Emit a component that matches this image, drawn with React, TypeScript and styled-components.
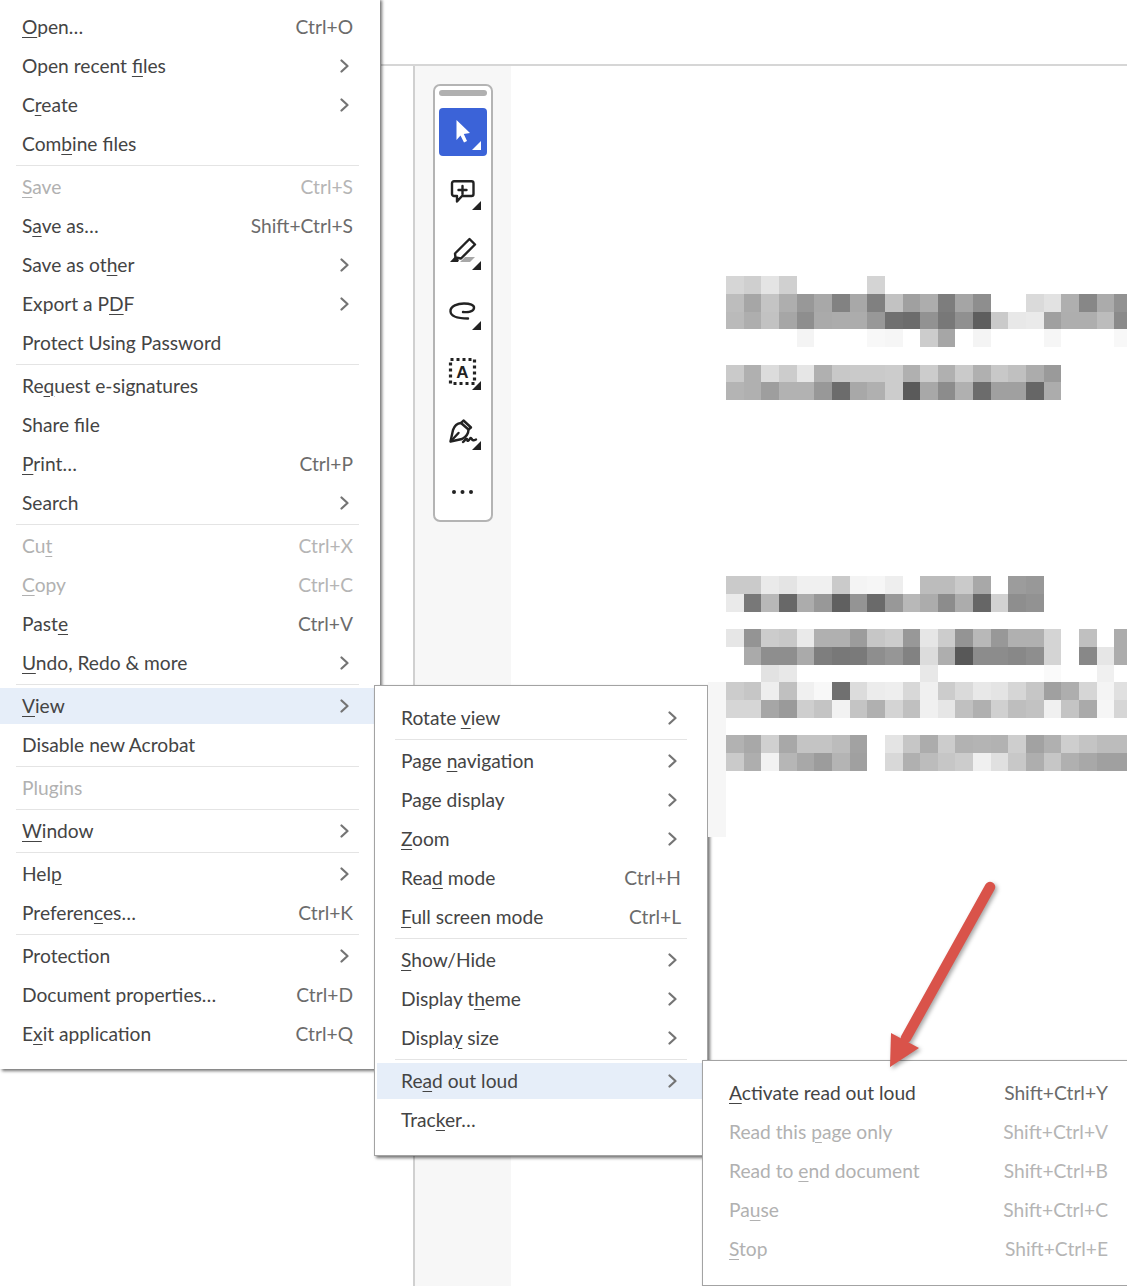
import React from 'react';
import styled, { createGlobalStyle } from 'styled-components';

const GlobalStyle = createGlobalStyle`
  html, body {
    margin: 0;
    padding: 0;
    background: #fff;
  }
  #root {
    width: 1127px;
    height: 1286px;
  }
`;

const Screen = styled.div`
  position: relative;
  width: 1127px;
  height: 1286px;
  overflow: hidden;
  background: #fff;
  font-family: 'Lato', 'Open Sans', sans-serif;
`;

const TopBar = styled.div`
  height: 64px;
  margin-left: 381px;
  border-bottom: 2px solid #d6d6d6;
`;

const Workspace = styled.div`
  display: flex;
  height: 1220px;
  padding-left: 413px;
`;

const ToolRail = styled.div`
  width: 96px;
  border-left: 2px solid #d0d0d0;
  background: #f7f7f7;
  padding: 18px 0 0 18px;
`;

const ToolBar = styled.div`
  width: 60px;
  height: 438px;
  box-sizing: border-box;
  border: 2px solid #b4b4b4;
  border-radius: 7px;
  background: #fff;
  padding: 4px 4px;
  display: flex;
  flex-direction: column;
  gap: 12px;
`;

const Grip = styled.div`
  height: 6px;
  border-radius: 3px;
  background: #b0b0b0;
`;

const ToolButton = styled.div<{ $active?: boolean }>`
  position: relative;
  flex: none;
  width: 48px;
  height: 48px;
  border-radius: 4px;
  display: flex;
  align-items: center;
  justify-content: center;
  background: ${(p) => (p.$active ? '#3b63d8' : 'transparent')};
  color: ${(p) => (p.$active ? '#fff' : '#222')};
`;

const Corner = styled.span<{ $active?: boolean }>`
  position: absolute;
  right: 6px;
  bottom: 6px;
  width: 9px;
  height: 9px;
  background: ${(p) => (p.$active ? '#fff' : '#222')};
  clip-path: polygon(100% 0, 100% 100%, 0 100%);
`;

const ToolIcon = styled.svg`
  display: block;
  width: 32px;
  height: 32px;
  fill: none;
  stroke: currentColor;
  stroke-width: 2.4;
  stroke-linejoin: round;
  stroke-linecap: round;
`;

const PageArea = styled.div`
  flex: 1;
  padding: 210px 0 0 215px;
  background: #fff;
`;

const Mosaic = styled.svg`
  display: block;
`;

const Menu = styled.div<{ $top: number; $left: number; $width: number; $height: number; $pad: number; $flush?: boolean }>`
  position: absolute;
  top: ${(p) => p.$top}px;
  left: ${(p) => p.$left}px;
  width: ${(p) => p.$width}px;
  height: ${(p) => p.$height}px;
  box-sizing: border-box;
  padding-top: ${(p) => p.$pad}px;
  display: flex;
  flex-direction: column;
  background: #fff;
  border: ${(p) => (p.$flush ? '0' : '1px solid #a3a3a3')};
  box-shadow: 2px 2px 3px rgba(0, 0, 0, 0.55);
`;

const Row = styled.div<{ $hot?: boolean; $inset: number; $end: number; $gutter: number }>`
  flex: none;
  box-sizing: border-box;
  display: flex;
  align-items: center;
  justify-content: space-between;
  height: 36px;
  margin: 1.5px 0 1.5px ${(p) => p.$gutter}px;
  padding: 0 ${(p) => p.$end}px 0 ${(p) => p.$inset - p.$gutter}px;
  background: ${(p) => (p.$hot ? '#e6eef9' : 'transparent')};
  font-size: 19.2px;
  line-height: 36px;
  white-space: nowrap;

  & > svg {
    margin-right: 3px;
  }
`;

const Label = styled.span<{ $off?: boolean }>`
  color: ${(p) => (p.$off ? '#b1b1b1' : '#444')};
`;

const Key = styled.span<{ $off?: boolean }>`
  color: ${(p) => (p.$off ? '#b5b5b5' : '#6b6b6b')};
`;

const Mnemonic = styled.span`
  text-decoration: underline;
  text-decoration-thickness: 1px;
  text-underline-offset: 3px;
`;

const Rule = styled.div<{ $from: number; $to: number }>`
  flex: none;
  height: 1px;
  margin: 1.5px ${(p) => p.$to}px 1.5px ${(p) => p.$from}px;
  background: #e4e4e4;
`;

// the pale band left of the pasted page image, it sits over the view menu's shadow
const ImageEdge = styled.div`
  position: absolute;
  left: 708px;
  top: 682px;
  width: 18px;
  height: 155px;
  background: #f6f6f6;
`;

const Arrow = styled.svg`
  position: absolute;
  left: 870px;
  top: 870px;
  filter: drop-shadow(2px 2px 2px rgba(0, 0, 0, 0.35));
`;

const Chevron = () => (
  <svg width="10" height="14" viewBox="0 0 10 14" fill="none">
    <path d="M1.500 1.500L7.500 7L1.500 12.500" stroke="#747474" strokeWidth="2.200" strokeLinecap="round" strokeLinejoin="round" />
  </svg>
);

// one entry per mosaic line: grid row, then grey levels; ff cells stay white
const mosaicRows: [number, string][] = [
  [0, 'd6 cf e4 d0 ff ff ff ff d4'],
  [1, 'bd a6 c4 ae 98 a8 82 a8 80 c2 a0 ad 7d a5 8e ff ff da e2 af 87 ab 92'],
  [2, 'ba ae c2 a6 8e aa ac ac 98 70 6c 92 78 90 5e ca e8 ea a0 ae ae bc 8a'],
  [3, 'ff ff ff ff f4 ff ff ff f8 f6 ff cc a6 ff f4 ff ff ff f6 ff ff ff f8'],
  [5, 'ca b0 dc cc e6 b0 c8 ca ca cc b0 cc b0 ca b0 c8 c0 ac 9a'],
  [6, 'b4 b0 9e b2 b2 98 6c a8 b0 cc 5a a8 8c b0 6c a0 a0 66 ac'],
  [17, 'ca ca ea e4 f0 f0 ca f4 f6 ee ff bc bc ca a8 ff 9c 98'],
  [18, 'ea 78 b8 68 ac 98 60 94 6a 98 b8 ac 8c ac 66 d2 8e 92'],
  [20, 'e6 94 cc c8 ea b0 b0 9c c6 cc 98 e6 cc 94 b8 98 b0 b0 d4 ff c0 ff ac'],
  [21, 'ff aa 8e 8e aa 7e 78 7a 8e 96 82 dc ae 58 8c 8c 88 8e d4 ff 88 e6 ac'],
  [22, 'ff ff e2 e8 ff ff ff ff ff ff ff e8 ff ff ff ff ff ff fa ff ff f0 ff'],
  [23, 'cc c6 ee c0 f0 f8 70 dc ec ee d8 f0 cc da e8 e4 d6 c6 a0 ae d6 f4 e0'],
  [24, 'd6 d6 a6 9a ce c4 f2 c4 b0 d4 c0 f0 e6 c0 b0 d0 be c2 f0 c4 aa f6 d6'],
  [26, 'b2 a8 d0 a8 c4 c4 bc a2 ff e4 c6 ac cc b2 b4 b2 ce a2 b0 ce c4 bc bc'],
  [27, 'ca ae f2 b6 a8 9c b4 a0 ff d8 b0 bc c6 cc f0 e0 c8 ae c6 b0 a8 a0 a0'],
];

const CELL = 17.65;

const BlurredPage = () => (
  <Mosaic width="401" height="500" viewBox="0 0 401 500" shapeRendering="crispEdges">
    {mosaicRows.map(([row, levels]) =>
      levels.split(' ').map((g, col) =>
        g === 'ff' ? null : (
          <rect key={`${row}-${col}`} x={col * CELL} y={row * CELL + 0.3} width={CELL} height={CELL} fill={`#${g}${g}${g}`} />
        )
      )
    )}
  </Mosaic>
);

type Item = { a?: string; u?: string; b?: string; key?: string; more?: boolean; off?: boolean; hot?: boolean } | 'rule';

const fileMenu: Item[] = [
  { u: 'O', b: 'pen…', key: 'Ctrl+O' },
  { a: 'Open recent ', u: 'f', b: 'iles', more: true },
  { a: 'C', u: 'r', b: 'eate', more: true },
  { a: 'Com', u: 'b', b: 'ine files' },
  'rule',
  { u: 'S', b: 'ave', key: 'Ctrl+S', off: true },
  { a: 'S', u: 'a', b: 've as…', key: 'Shift+Ctrl+S' },
  { a: 'Save as ot', u: 'h', b: 'er', more: true },
  { a: 'Export a P', u: 'D', b: 'F', more: true },
  { a: 'Protect Using Password' },
  'rule',
  { a: 'Re', u: 'q', b: 'uest e-signatures' },
  { a: 'Share file' },
  { u: 'P', b: 'rint…', key: 'Ctrl+P' },
  { a: 'Search', more: true },
  'rule',
  { a: 'Cu', u: 't', key: 'Ctrl+X', off: true },
  { u: 'C', b: 'opy', key: 'Ctrl+C', off: true },
  { a: 'Past', u: 'e', key: 'Ctrl+V' },
  { u: 'U', b: 'ndo, Redo & more', more: true },
  'rule',
  { u: 'V', b: 'iew', more: true, hot: true },
  { a: 'Disable new Acrobat' },
  'rule',
  { a: 'Plugins', off: true },
  'rule',
  { u: 'W', b: 'indow', more: true },
  'rule',
  { a: 'Hel', u: 'p', more: true },
  { a: 'Preferen', u: 'c', b: 'es…', key: 'Ctrl+K' },
  'rule',
  { a: 'Protection', more: true },
  { a: 'Document properties…', key: 'Ctrl+D' },
  { a: 'E', u: 'x', b: 'it application', key: 'Ctrl+Q' },
];

const viewMenu: Item[] = [
  { a: 'Rotate ', u: 'v', b: 'iew', more: true },
  'rule',
  { a: 'Page ', u: 'n', b: 'avigation', more: true },
  { a: 'Page display', more: true },
  { u: 'Z', b: 'oom', more: true },
  { a: 'Rea', u: 'd', b: ' mode', key: 'Ctrl+H' },
  { u: 'F', b: 'ull screen mode', key: 'Ctrl+L' },
  'rule',
  { u: 'S', b: 'how/Hide', more: true },
  { a: 'Display t', u: 'h', b: 'eme', more: true },
  { a: 'Displa', u: 'y', b: ' size', more: true },
  'rule',
  { a: 'Re', u: 'a', b: 'd out loud', more: true, hot: true },
  { a: 'Trac', u: 'k', b: 'er…' },
];

const readMenu: Item[] = [
  { u: 'A', b: 'ctivate read out loud', key: 'Shift+Ctrl+Y' },
  { a: 'Read this ', u: 'p', b: 'age only', key: 'Shift+Ctrl+V', off: true },
  { a: 'Read to ', u: 'e', b: 'nd document', key: 'Shift+Ctrl+B', off: true },
  { a: 'Pa', u: 'u', b: 'se', key: 'Shift+Ctrl+C', off: true },
  { u: 'S', b: 'top', key: 'Shift+Ctrl+E', off: true },
];

const MenuRows = ({ items, inset, end, gutter, ruleFrom, ruleTo }: { items: Item[]; inset: number; end: number; gutter: number; ruleFrom: number; ruleTo: number }) => (
  <>
    {items.map((item, i) =>
      item === 'rule' ? (
        <Rule key={i} $from={ruleFrom} $to={ruleTo} />
      ) : (
        <Row key={i} $hot={item.hot} $inset={inset} $end={end} $gutter={gutter}>
          <Label $off={item.off}>
            {item.a}
            {item.u && <Mnemonic>{item.u}</Mnemonic>}
            {item.b}
          </Label>
          {item.key && <Key $off={item.off}>{item.key}</Key>}
          {item.more && <Chevron />}
        </Row>
      )
    )}
  </>
);

export default function App() {
  return (
    <Screen>
      <GlobalStyle />
      <TopBar />
      <Workspace>
        <ToolRail>
          <ToolBar>
            <Grip />
            <ToolButton $active>
              <ToolIcon viewBox="0 0 32 32">
                <path d="M9.500 4V24L13.500 19.500L17 26.500L20 25L16.800 18L23 17Z" fill="currentColor" stroke="none" />
              </ToolIcon>
              <Corner $active />
            </ToolButton>
            <ToolButton>
              <ToolIcon viewBox="0 0 32 32">
                <path d="M7 5.200H24.500a2 2 0 0 1 2 2V18a2 2 0 0 1-2 2H15L10 25.500V20H7a2 2 0 0 1-2-2V7.200a2 2 0 0 1 2-2z" />
                <path d="M15.500 10v8M11.500 14h8" />
              </ToolIcon>
              <Corner />
            </ToolButton>
            <ToolButton>
              <ToolIcon viewBox="0 0 32 32">
                <path d="M22.500 3L28 8.500L14 22.500L8.500 21.500L8 17.500Z" />
                <path d="M3 26L8 20.500L12 24L11 26Z" fill="currentColor" stroke="none" />
                <path d="M13 26L18 21H28L23 26Z" fill="#a8a8a8" stroke="none" />
              </ToolIcon>
              <Corner />
            </ToolButton>
            <ToolButton>
              <ToolIcon viewBox="0 0 32 32">
                <path d="M21 22.500C14 22.500 4 22 3.500 15.500C3 10 11 7.500 17 7.500C23 7.500 27.500 9 27 12C26.500 15.500 21 16.500 16 16" />
              </ToolIcon>
              <Corner />
            </ToolButton>
            <ToolButton>
              <ToolIcon viewBox="0 0 32 32">
                <rect x="3.500" y="3.500" width="24" height="24" strokeWidth="3.200" strokeDasharray="3 3" strokeLinecap="butt" strokeLinejoin="miter" />
                <text x="15.500" y="22" textAnchor="middle" fontFamily="'Liberation Sans', sans-serif" fontSize="17" fontWeight="700" fill="currentColor" stroke="none">
                  A
                </text>
              </ToolIcon>
              <Corner />
            </ToolButton>
            <ToolButton>
              <ToolIcon viewBox="0 0 32 32">
                <path d="M16.500 4.500L24 11.500L21.500 13.500L14 7Z" />
                <path d="M14 7C9 7.500 7 11 6 14L3.500 25.500L15 23C19 21 21.500 18 21.500 13.500" />
                <path d="M4 25L11.500 17" />
                <path d="M16 26C18 25 18.500 22 20 23C20.500 24 20 25.500 21.500 24.500C23 23.500 23 21 24.500 22.500C25 24 26 25 29 23.500" />
              </ToolIcon>
              <Corner />
            </ToolButton>
            <ToolButton>
              <ToolIcon viewBox="0 0 32 32">
                <circle cx="7" cy="16" r="2" fill="currentColor" stroke="none" />
                <circle cx="15.500" cy="16" r="2" fill="currentColor" stroke="none" />
                <circle cx="24" cy="16" r="2" fill="currentColor" stroke="none" />
              </ToolIcon>
            </ToolButton>
          </ToolBar>
        </ToolRail>
        <PageArea>
          <BlurredPage />
        </PageArea>
      </Workspace>

      <Menu $top={-2} $left={0} $width={380} $height={1071} $pad={9} $flush>
        <MenuRows items={fileMenu} inset={22} end={27} gutter={0} ruleFrom={16} ruleTo={21} />
      </Menu>
      <Menu $top={685} $left={374} $width={334} $height={471} $pad={12}>
        <MenuRows items={viewMenu} inset={26} end={26} gutter={2} ruleFrom={20} ruleTo={20} />
      </Menu>
      <ImageEdge />
      <Menu $top={1060} $left={702} $width={440} $height={226} $pad={12}>
        <MenuRows items={readMenu} inset={26} end={33} gutter={0} ruleFrom={20} ruleTo={20} />
      </Menu>

      <Arrow width="140" height="210" viewBox="0 0 140 210">
        <path d="M120 17L36 168" stroke="#d9534a" strokeWidth="10.500" strokeLinecap="round" fill="none" />
        <path d="M21 163L20 197L49 178z" fill="#d9534a" />
      </Arrow>
    </Screen>
  );
}
